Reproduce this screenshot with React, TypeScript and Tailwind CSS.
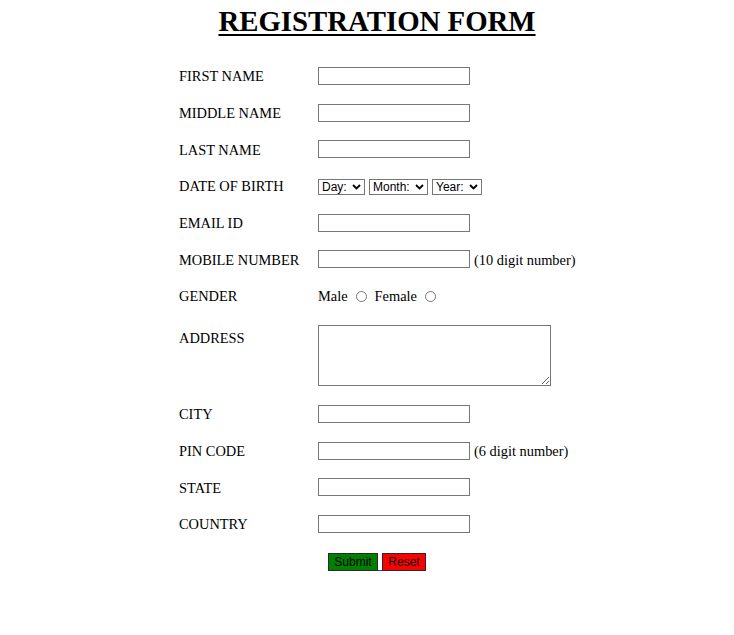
import { ReactNode } from 'react';

const serif = { fontFamily: '"Liberation Serif", "Times New Roman", serif' };

const Row = ({ label, children, h = 'h-[36.67px]' }: { label: string; children?: ReactNode; h?: string }) => (
    <div className={`flex items-center ${h}`}>
        <span className="mt-[1px] w-[139px] shrink-0 text-[14.4px] leading-4 text-black">{label}</span>
        <div className="flex items-center whitespace-nowrap">{children}</div>
    </div>
);

const TextBox = () => (
    <input type="text" className="h-[18px] w-[152px] border border-[#767676] bg-white px-0.5 text-[13px] outline-none" />
);

const Select = ({ label, w }: { label: string; w: string }) => (
    <span
        className={`mt-[2px] flex h-[16px] ${w} items-center justify-between border border-[#767676] bg-white pl-[3px] pr-[3px] text-[12px] leading-none text-black`}
        style={{ fontFamily: '"Liberation Sans", Arial, sans-serif' }}
    >
        <span>{label}</span>
        <svg width="9" height="6" viewBox="0 0 9 6" className="shrink-0">
            <path d="M1 1 L4.5 4.5 L8 1" fill="none" stroke="#000" strokeWidth="1.8" />
        </svg>
    </span>
);

const Radio = ({ name }: { name: string }) => (
    <input
        type="radio"
        name={name}
        className="mx-[8px] mt-[1px] h-[11px] w-[11px] appearance-none rounded-full border border-[#767676] bg-white"
    />
);

const Hint = ({ children }: { children: ReactNode }) => (
    <span className="ml-[4px] mt-[1px] whitespace-nowrap text-[14.4px] leading-4">{children}</span>
);

export default function App() {
    return (
        <div className="flex min-h-[635px] w-full flex-col items-center bg-white pl-[20px] text-black" style={serif}>
            <h1 className="mt-[5px] text-[28.8px] font-bold leading-[32px] underline decoration-2 underline-offset-[3px]">
                REGISTRATION FORM
            </h1>
            <form className="mt-[20.67px] w-[396px]" onSubmit={e => e.preventDefault()}>
                <Row label="FIRST NAME"><TextBox /></Row>
                <Row label="MIDDLE NAME"><TextBox /></Row>
                <Row label="LAST NAME"><TextBox /></Row>
                <Row label="DATE OF BIRTH">
                    <div className="flex gap-[4px]">
                        <Select label="Day:" w="w-[47px]" />
                        <Select label="Month:" w="w-[59px]" />
                        <Select label="Year:" w="w-[50px]" />
                    </div>
                </Row>
                <Row label="EMAIL ID"><TextBox /></Row>
                <Row label="MOBILE NUMBER">
                    <TextBox />
                    <Hint>(10 digit number)</Hint>
                </Row>
                <Row label="GENDER">
                    <span className="mt-[1px] text-[14.4px] leading-4">Male</span>
                    <Radio name="gender" />
                    <span className="mt-[1px] text-[14.4px] leading-4">Female</span>
                    <Radio name="gender" />
                </Row>
                <div className="flex h-[81.33px] items-start">
                    <span className="mt-[16px] w-[139px] shrink-0 text-[14.4px] leading-4">ADDRESS</span>
                    <textarea className="mt-[10.67px] h-[61px] w-[233px] resize border border-[#767676] bg-white outline-none" />
                </div>
                <Row label="CITY"><TextBox /></Row>
                <Row label="PIN CODE">
                    <TextBox />
                    <Hint>(6 digit number)</Hint>
                </Row>
                <Row label="STATE"><TextBox /></Row>
                <Row label="COUNTRY"><TextBox /></Row>
                <div
                    className="mt-[11px] flex items-end justify-center text-[12px]"
                    style={{ fontFamily: '"Liberation Sans", Arial, sans-serif' }}
                >
                    <button type="submit" className="h-[18px] w-[50px] border border-[#2a2a2a] bg-[#008000] leading-none text-black">
                        Submit
                    </button>
                    <span className="h-[1px] w-[4px] bg-[#3b3bb0]" />
                    <button type="reset" className="h-[18px] w-[44px] border border-[#2a2a2a] bg-[#ff0000] leading-none text-black">
                        Reset
                    </button>
                </div>
            </form>
        </div>
    );
}
